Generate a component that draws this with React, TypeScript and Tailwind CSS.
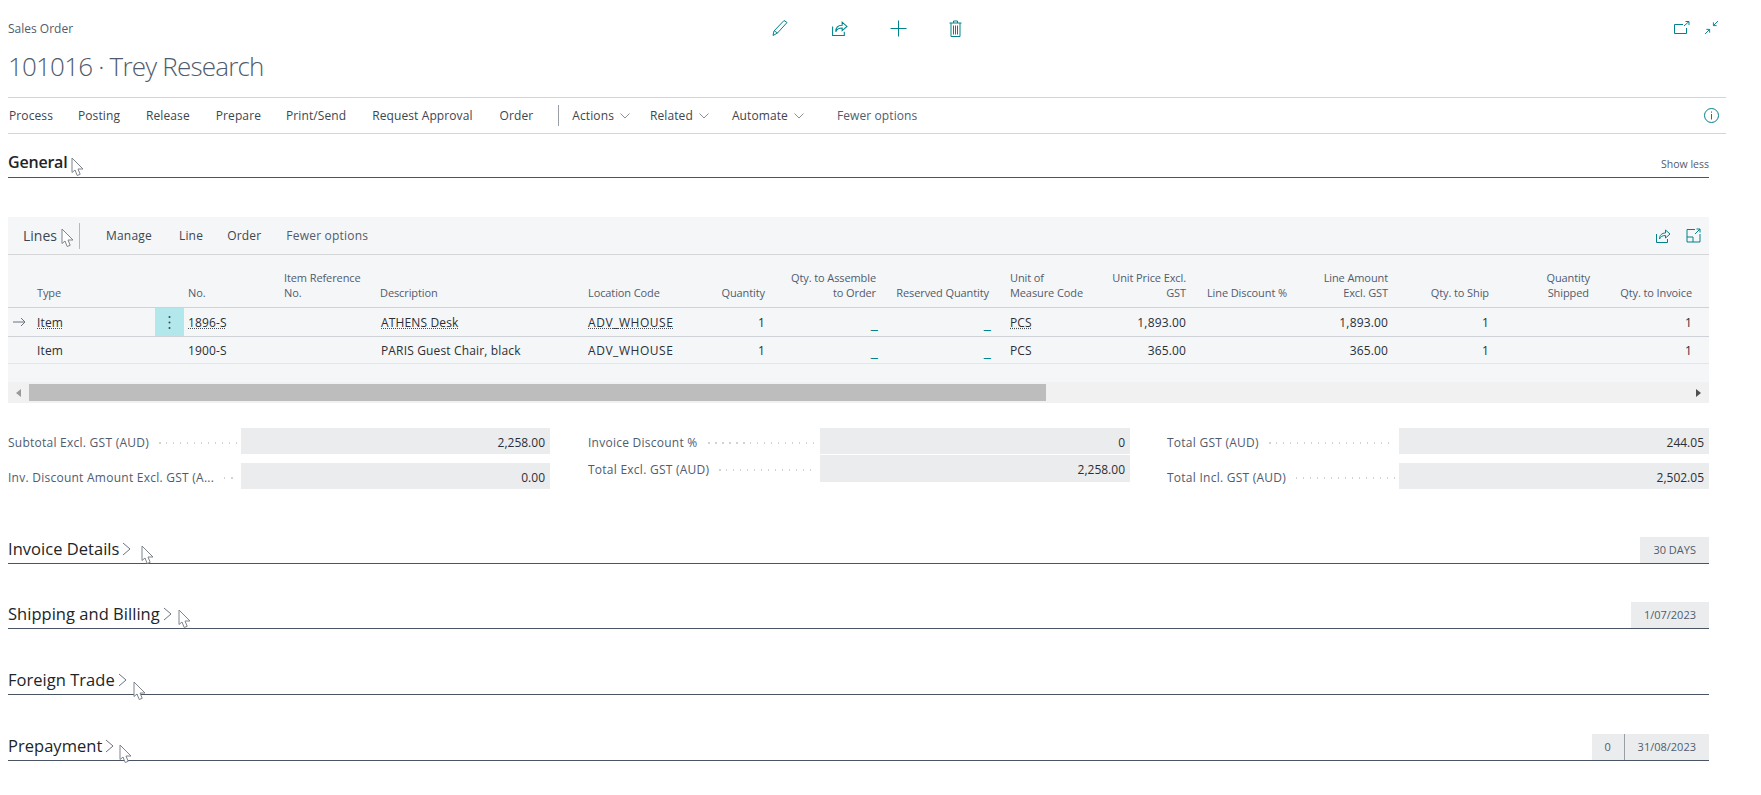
import React from "react";

const teal = "#00838a";

function Cursor({ className }: { className: string }) {
  return (
    <svg className={`absolute ${className}`} width="13" height="20" viewBox="0 0 13 20" fill="#fff" stroke="#7f848b" strokeWidth="1">
      <path d="M1 1v14.500l3-2.500 2.200 5.500 3-1.200-2.200-5.300h5z" />
    </svg>
  );
}

function Chevron({ className = "" }: { className?: string }) {
  return (
    <svg className={className} width="10" height="6" viewBox="0 0 10 6" fill="none" stroke="#8a8f96" strokeWidth="1">
      <path d="M0.5 0.5 5 5 9.5 0.5" />
    </svg>
  );
}

function ChevronRight() {
  return (
    <svg className="ml-[3px]" width="9" height="14" viewBox="0 0 9 14" fill="none" stroke="#6b7280" strokeWidth="1">
      <path d="M1 1l7 6-7 6" />
    </svg>
  );
}

function ShareIcon({ size = 16 }: { size?: number }) {
  return (
    <svg width={size} height={size} viewBox="0 0 16 16" fill="none" stroke={teal} strokeWidth="1">
      <path d="M1.5 6v8.500h11V11" />
      <path d="M4.500 11c0-4 2.500-6 6-6V2l4.500 4-4.500 4V7.500c-3 0-5 1-6 3.500z" />
    </svg>
  );
}

const HEAD = "flex items-end text-[11px] leading-[15px] text-[#505c6d] tracking-[-0.1px] px-1 pb-[7px] whitespace-pre-line";
const CELL = "flex items-center text-[12px] text-[#2b2f36] tracking-[0.15px] px-1 pt-px";

const columns = [
  { label: "", cls: "" },
  { label: "Type", cls: "" },
  { label: "No.", cls: "" },
  { label: "Item Reference\nNo.", cls: "" },
  { label: "Description", cls: "" },
  { label: "Location Code", cls: "" },
  { label: "Quantity", cls: "justify-end text-right" },
  { label: "Qty. to Assemble\nto Order", cls: "justify-end text-right" },
  { label: "Reserved Quantity", cls: "justify-end text-right" },
  { label: "Unit of\nMeasure Code", cls: "pl-[17px]" },
  { label: "Unit Price Excl.\nGST", cls: "justify-end text-right" },
  { label: "Line Discount %", cls: "justify-end text-right" },
  { label: "Line Amount\nExcl. GST", cls: "justify-end text-right" },
  { label: "Qty. to Ship", cls: "justify-end text-right" },
  { label: "Quantity\nShipped", cls: "justify-end text-center" },
  { label: "Qty. to Invoice", cls: "justify-end text-right" },
];

const GRID = "grid grid-cols-[25px_151px_96px_96px_208px_100px_85px_111px_113px_107px_90px_101px_101px_101px_101px_102px_14px]";

function Line({ current, no, desc, price }: { current?: boolean; no: string; desc: string; price: string }) {
  const d = current ? "underline decoration-dotted decoration-[#4a4f57] underline-offset-[1px]" : "";
  return (
    <div className={`${GRID} ${current ? "h-[29px]" : "h-[27px]"} border-b ${current ? "border-[#cfd2d6]" : "border-[#e3e5e8]"}`}>
      <div className="flex items-center pl-[5px]">
        {current && (
          <svg width="13" height="10" viewBox="0 0 13 10" fill="none" stroke="#6b7280" strokeWidth="1">
            <path d="M0 5h12M8 1l4 4-4 4" />
          </svg>
        )}
      </div>
      <div className="flex items-stretch">
        <div className={`${CELL} flex-1`}><span className={d}>Item</span></div>
        {current && (
          <div className="w-[29px] bg-[#b2e8ec] flex items-center justify-center">
            <svg width="3" height="15" viewBox="0 0 3 15" fill="#3c4650">
              <circle cx="1.500" cy="2" r="1" />
              <circle cx="1.500" cy="7.500" r="1" />
              <circle cx="1.500" cy="13" r="1" />
            </svg>
          </div>
        )}
      </div>
      <div className={CELL}><span className={d}>{no}</span></div>
      <div className={CELL}></div>
      <div className={`${CELL} pl-[5px]`}><span className={d}>{desc}</span></div>
      <div className={CELL}><span className={`${d} tracking-[0.55px]`}>ADV_WHOUSE</span></div>
      <div className={`${CELL} justify-end`}>1</div>
      <div className={`${CELL} justify-end text-[16px] text-[#00838a]`}><span className="-mr-[2px]">_</span></div>
      <div className={`${CELL} justify-end text-[16px] text-[#00838a]`}><span className="-mr-[2px]">_</span></div>
      <div className={`${CELL} pl-[17px]`}><span className={d}>PCS</span></div>
      <div className={`${CELL} justify-end`}>{price}</div>
      <div className={CELL}></div>
      <div className={`${CELL} justify-end`}>{price}</div>
      <div className={`${CELL} justify-end`}>1</div>
      <div className={CELL}></div>
      <div className={`${CELL} justify-end`}>1</div>
      <div></div>
    </div>
  );
}

function Total({ label, value, labelWidth, className = "" }: { label: string; value: string; labelWidth: string; className?: string }) {
  return (
    <div className={`flex items-center ${className}`}>
      <div className={`${labelWidth} flex items-center shrink-0 pr-[4px] pt-[3px]`}>
        <span className="text-[12px] tracking-[0.25px] text-[#505c6d] whitespace-nowrap">{label}</span>
        <span className="flex-1 ml-[10px] h-[2px] bg-[repeating-linear-gradient(90deg,#d0d2d5_0_1.5px,transparent_1.5px_7px)]" />
      </div>
      <div className="flex-1 h-full bg-[#ebecee] flex items-center justify-end px-[5px] pt-[3px] text-[12px] text-[#2b2f36]">{value}</div>
    </div>
  );
}

function Section({ title, cursor, chips, mt }: { title: string; cursor: string; chips?: string[]; mt: string }) {
  return (
    <div className={`relative ${mt} h-[38px] border-b border-[#4a5563] flex items-end justify-between`}>
      <div className="flex items-center self-start pt-[12px] text-[16.5px] tracking-[0.03px] leading-[22px] font-medium text-[#212529]">
        {title}
        <ChevronRight />
      </div>
      <div className="flex h-[26px]">
        {chips?.map((c) => (
          <div key={c} className={`bg-[#ebecee] flex items-center justify-center text-[11px] text-[#505c6d] ${c === "0" ? "w-[33px] border-r border-[#9a9fa6]" : "px-[13px]"}`}>
            {c}
          </div>
        ))}
      </div>
      <Cursor className={cursor} />
    </div>
  );
}

export default function App() {
  return (
    <div className="min-h-[795px] w-[1761px] bg-white pl-2 pr-[35px] overflow-hidden font-['Open_Sans',sans-serif] text-[#212529]">
      <div className="relative flex items-start justify-between h-[97px]">
        <div className="pt-[21px]">
          <div className="text-[12px] leading-[16px] text-[#505c6d]">Sales Order</div>
          <div className="mt-[11px] text-[26px] leading-[36px] font-light tracking-[-0.8px] text-[#505c6d]">101016 · Trey Research</div>
        </div>
        <div className="flex items-center gap-[42px] pt-[19px] ml-[-204px]">
          <svg width="18" height="18" viewBox="0 0 18 18" fill="none" stroke={teal} strokeWidth="1">
            <path d="M13 1.500l3 2-9.500 10.500-4.500 2.500 1-4.500z M3.500 12l3 2" />
          </svg>
          <ShareIcon size={17} />
          <svg width="17" height="17" viewBox="0 0 17 17" fill="none" stroke={teal} strokeWidth="1">
            <path d="M8.500 0.500v16M0.500 8.500h16" />
          </svg>
          <svg width="13" height="17" viewBox="0 0 13 17" fill="none" stroke={teal} strokeWidth="1">
            <path d="M0.500 3h12M4.500 3V1h4v2M2 3v13.500h9V3M4.500 5.500v9M6.500 5.500v9M8.500 5.500v9" />
          </svg>
        </div>
        <div className="flex items-center gap-[14px] pt-[20px] pr-[7px]">
          <svg width="16" height="14" viewBox="0 0 16 14" fill="none" stroke={teal} strokeWidth="1">
            <path d="M9 3.500H0.500v9h12V7M10 5l5-4.500M11.500 0.500h3.500v3.500" />
          </svg>
          <svg width="15" height="15" viewBox="0 0 16 16" fill="none" stroke={teal} strokeWidth="1">
            <path d="M1 15l5-5M6 10H2.500M6 10v3.500M15 1l-5 5M10 6h3.500M10 6V2.500" />
          </svg>
        </div>
      </div>

      <div className="flex items-center h-[37px] border-y border-[#d4d5d7] pl-[1px] pr-[7px] text-[12px] tracking-[0.1px] text-[#3c4650]">
        <span>Process</span>
        <span className="ml-[25px]">Posting</span>
        <span className="ml-[26px]">Release</span>
        <span className="ml-[26px]">Prepare</span>
        <span className="ml-[25px]">Print/Send</span>
        <span className="ml-[26px]">Request Approval</span>
        <span className="ml-[27px]">Order</span>
        <span className="ml-[25px] mr-[13px] h-[21px] w-px bg-[#9a9fa6]" />
        <span>Actions</span>
        <Chevron className="ml-[6px]" />
        <span className="ml-[20px]">Related</span>
        <Chevron className="ml-[6px]" />
        <span className="ml-[23px]">Automate</span>
        <Chevron className="ml-[6px]" />
        <span className="ml-[33px] text-[#505c6d]">Fewer options</span>
        <svg className="ml-auto" width="15" height="15" viewBox="0 0 15 15" fill="none" stroke={teal} strokeWidth="1">
          <circle cx="7.500" cy="7.500" r="7" />
          <path d="M7.500 6v5.500M7.500 3.500v1.200" />
        </svg>
      </div>

      <div className="pr-[17px]">
        <div className="relative h-[44px] border-b border-[#4a5563] flex items-end justify-between pb-[1px]">
          <span className="text-[16px] leading-[22px] mb-[3px] font-semibold text-[#212529] tracking-[-0.2px]">General</span>
          <span className="text-[10.5px] mb-[3px] text-[#505c6d]">Show less</span>
          <Cursor className="left-[63px] top-[23px]" />
        </div>

        <div className="mt-[39px] bg-[#f5f6f8]">
          <div className="relative flex items-center h-[38px] border-b border-[#d4d5d7] pl-[15px] pr-[8px] text-[12px] tracking-[0.2px] text-[#3c4650]">
            <span className="text-[14px] tracking-normal text-[#3c4650]">Lines</span>
            <Cursor className="left-[53px] top-[11px]" />
            <span className="ml-[22px] h-[26px] w-px bg-[#b5b8bc]" />
            <span className="ml-[26px]">Manage</span>
            <span className="ml-[27px]">Line</span>
            <span className="ml-[24px]">Order</span>
            <span className="ml-[25px] text-[#505c6d]">Fewer options</span>
            <div className="ml-auto flex items-center gap-[15px]">
              <ShareIcon size={16} />
              <svg width="15" height="15" viewBox="0 0 15 15" fill="none" stroke={teal} strokeWidth="1">
                <path d="M9 1.500H1v12.500h13V6M1 9h6v5M9 6l5-5M10.500 1H14v3.500" />
              </svg>
            </div>
          </div>
          <div className={`${GRID} h-[53px] border-b border-[#cfd2d6]`}>
            {columns.map((c) => (
              <div key={c.label} className={`${HEAD} ${c.cls}`}>
                <span>{c.label}</span>
              </div>
            ))}
            <div />
          </div>
          <Line current no="1896-S" desc="ATHENS Desk" price="1,893.00" />
          <Line no="1900-S" desc="PARIS Guest Chair, black" price="365.00" />
          <div className="h-[18px]" />
          <div className="flex items-center h-[21px] bg-[#f1f1f1]">
            <svg className="ml-[8px] shrink-0" width="5" height="8" viewBox="0 0 5 8" fill="#9a9a9a"><path d="M5 0v8L0 4z" /></svg>
            <div className="ml-[8px] h-[17px] w-[1017px] bg-[#bdbdbd]" />
            <svg className="ml-auto mr-[8px] shrink-0" width="5" height="8" viewBox="0 0 5 8" fill="#505050"><path d="M0 0v8l5-4z" /></svg>
          </div>
        </div>

        <div className="mt-[25px] grid grid-cols-[542px_580px_1fr] h-[62px]">
          <div className="flex flex-col gap-[9px]">
            <Total label="Subtotal Excl. GST (AUD)" value="2,258.00" labelWidth="w-[233px]" className="h-[26px]" />
            <Total label="Inv. Discount Amount Excl. GST (A..." value="0.00" labelWidth="w-[233px]" className="h-[26px]" />
          </div>
          <div className="flex flex-col gap-px pl-[38px]">
            <Total label="Invoice Discount %" value="0" labelWidth="w-[232px]" className="h-[26px]" />
            <Total label="Total Excl. GST (AUD)" value="2,258.00" labelWidth="w-[232px]" className="h-[27px]" />
          </div>
          <div className="flex flex-col gap-[9px] pl-[37px]">
            <Total label="Total GST (AUD)" value="244.05" labelWidth="w-[232px]" className="h-[26px]" />
            <Total label="Total Incl. GST (AUD)" value="2,502.05" labelWidth="w-[232px]" className="h-[26px]" />
          </div>
        </div>

        <Section title="Invoice Details" cursor="left-[133px] top-[19px]" chips={["30 DAYS"]} mt="mt-[36px]" />
        <Section title="Shipping and Billing" cursor="left-[170px] top-[18px]" chips={["1/07/2023"]} mt="mt-[27px]" />
        <Section title="Foreign Trade" cursor="left-[125px] top-[24px]" mt="mt-[28px]" />
        <Section title="Prepayment" cursor="left-[111px] top-[21px]" chips={["0", "31/08/2023"]} mt="mt-[28px]" />
      </div>
    </div>
  );
}
